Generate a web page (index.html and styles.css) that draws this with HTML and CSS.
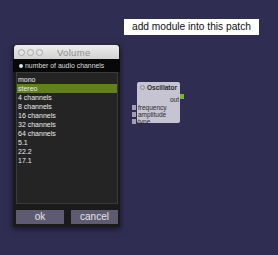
FILE: index.html
```html
<!DOCTYPE html>
<html>
<head>
<meta charset="utf-8">
<link rel="stylesheet" href="styles.css">
</head>
<body>
<div class="canvas">
  <div class="label">add module into this patch</div>

  <div class="window">
    <div class="titlebar">
      <span class="dot"></span><span class="dot"></span><span class="dot"></span>
      <span class="title">Volume</span>
    </div>
    <div class="header"><span class="bullet"></span>number of audio channels</div>
    <div class="list">
      <div class="item">mono</div>
      <div class="item selected">stereo</div>
      <div class="item">4 channels</div>
      <div class="item">8 channels</div>
      <div class="item">16 channels</div>
      <div class="item">32 channels</div>
      <div class="item">64 channels</div>
      <div class="item">5.1</div>
      <div class="item">22.2</div>
      <div class="item">17.1</div>
    </div>
    <div class="buttons">
      <div class="btn ok">ok</div>
      <div class="btn cancel">cancel</div>
    </div>
  </div>

  <div class="module">
    <div class="mod-title"><span class="mod-icon"></span>Oscillator</div>
    <div class="out-row">out<span class="out-port"></span></div>
    <div class="in-row"><span class="in-port"></span>frequency</div>
    <div class="in-row"><span class="in-port"></span>amplitude</div>
    <div class="in-row"><span class="in-port"></span>type</div>
  </div>
</div>
</body>
</html>
```
FILE: styles.css
```css
html, body {
  margin: 0;
  padding: 0;
  background: #2f2d52;
  font-family: "Liberation Sans", Arial, sans-serif;
}
.canvas {
  position: relative;
  width: 278px;
  height: 255px;
  overflow: hidden;
}
.label {
  position: absolute;
  left: 124px;
  top: 19px;
  width: 135px;
  height: 16px;
  background: #ffffff;
  color: #111;
  font-size: 10.2px;
  line-height: 16px;
  text-align: center;
}
.window {
  position: absolute;
  left: 13px;
  top: 45px;
  width: 107px;
  height: 182px;
  background: #1a1a1a;
  box-shadow: 0 2px 6px rgba(0,0,0,0.55);
  display: flex;
  flex-direction: column;
}
.titlebar {
  height: 14px;
  margin: 0 1px;
  background: linear-gradient(#ededed, #d2d2d2);
  border-radius: 3px 3px 0 0;
  display: flex;
  align-items: center;
  padding-left: 4px;
  gap: 2px;
}
.dot {
  width: 5px;
  height: 5px;
  border-radius: 50%;
  border: 1px solid #a9a9a9;
  background: #e4e4e4;
}
.title {
  margin-left: 12px;
  font-size: 9.5px;
  color: #8e8e8e;
  letter-spacing: 0.3px;
}
.header {
  height: 13px;
  background: #080808;
  color: #dcdcdc;
  font-size: 6.9px;
  display: flex;
  align-items: center;
  padding-left: 6px;
}
.bullet {
  width: 4px;
  height: 4px;
  border-radius: 50%;
  background: #e0e0e0;
  margin-right: 2px;
}
.list {
  margin: 0 2px 0 3px;
  height: 128px;
  background: #242424;
  border: 1px solid #3a3a3a;
  padding-top: 2px;
}
.item {
  height: 9px;
  line-height: 9px;
  font-size: 7px;
  color: #ececec;
  padding-left: 1px;
}
.item.selected {
  background: #62801f;
}
.buttons {
  display: flex;
  gap: 7px;
  margin: 6px 2px 0 3px;
}
.btn {
  height: 14px;
  line-height: 14px;
  background: #5e5a71;
  color: #e6e6e6;
  font-size: 10px;
  text-align: center;
}
.ok { width: 48px; }
.cancel { width: 47px; }

.module {
  position: absolute;
  left: 137px;
  top: 82px;
  width: 43px;
  height: 41px;
  background: #c6c3d3;
  border-radius: 2px;
  color: #2a2a2a;
  font-size: 6.5px;
}
.mod-title {
  display: flex;
  align-items: center;
  font-weight: bold;
  height: 9px;
  margin-top: 1px;
  padding-left: 3px;
  gap: 2px;
}
.mod-icon {
  width: 3px;
  height: 3px;
  border-radius: 50%;
  border: 1px solid #8f8c9c;
}
.out-row {
  position: relative;
  text-align: right;
  padding-right: 1px;
  height: 8px;
  line-height: 8px;
  margin-top: 4px;
}
.out-port {
  position: absolute;
  right: -4px;
  top: -2px;
  width: 4px;
  height: 5px;
  background: #7bb52d;
}
.in-row {
  position: relative;
  height: 7px;
  line-height: 7px;
  padding-left: 1px;
}
.in-port {
  position: absolute;
  left: -5px;
  top: 1px;
  width: 4px;
  height: 5px;
  background: #a29fb1;
}
```
